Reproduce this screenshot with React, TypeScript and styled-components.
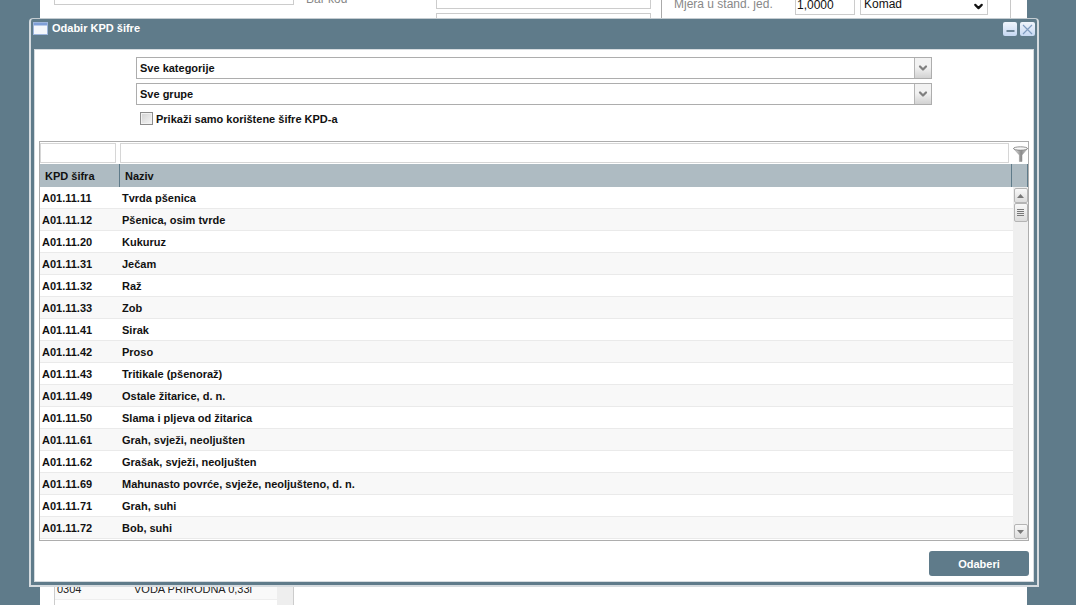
import styled, { createGlobalStyle } from "styled-components";
import { ChevronDown } from "lucide-react";

const rows = [
  ["A01.11.11", "Tvrda pšenica"],
  ["A01.11.12", "Pšenica, osim tvrde"],
  ["A01.11.20", "Kukuruz"],
  ["A01.11.31", "Ječam"],
  ["A01.11.32", "Raž"],
  ["A01.11.33", "Zob"],
  ["A01.11.41", "Sirak"],
  ["A01.11.42", "Proso"],
  ["A01.11.43", "Tritikale (pšenoraž)"],
  ["A01.11.49", "Ostale žitarice, d. n."],
  ["A01.11.50", "Slama i pljeva od žitarica"],
  ["A01.11.61", "Grah, svježi, neoljušten"],
  ["A01.11.62", "Grašak, svježi, neoljušten"],
  ["A01.11.69", "Mahunasto povrće, svježe, neoljušteno, d. n."],
  ["A01.11.71", "Grah, suhi"],
  ["A01.11.72", "Bob, suhi"],
];

const GlobalStyle = createGlobalStyle`
  html, body {
    margin: 0;
    height: 605px;
    overflow: hidden;
    background: #5f7b8a;
    font-family: "Liberation Sans", Arial, sans-serif;
  }
`;

export default function App() {
  return (
    <>
      <GlobalStyle />
      <Page>
        <BackTop>
          <BackInput />
          <BackLabel>Bar kod</BackLabel>
          <BackWideColumn>
            <BackWide />
            <BackWideNext />
          </BackWideColumn>
          <BackDivider />
          <BackUnit>Mjera u stand. jed.</BackUnit>
          <BackNumber>1,0000</BackNumber>
          <BackSelect>
            Komad
            <ChevronDown size={13} strokeWidth={4} color="#111" />
          </BackSelect>
        </BackTop>
        <BackList>
          <BackRows>
            <BackRow>
              <span>0304</span>
              <span>VODA PRIRODNA 0,33l</span>
            </BackRow>
          </BackRows>
          <BackScroll />
        </BackList>
      </Page>
      <Dialog>
        <TitleBar>
          <WindowIcon width="15" height="13" viewBox="0 0 15 13">
            <rect x="0.5" y="0.5" width="14" height="12" fill="#f4f7fc" stroke="#9db5dc" />
            <rect x="1" y="1" width="13" height="2.5" fill="#7f9fd8" />
          </WindowIcon>
          <Title>Odabir KPD šifre</Title>
          <WindowButtons>
            <WindowButton $width={14}>
              <svg width="9" height="9" viewBox="0 0 9 9">
                <rect x="0.5" y="5" width="8" height="2" fill="#6d8597" />
              </svg>
            </WindowButton>
            <WindowButton $width={15}>
              <svg width="11" height="11" viewBox="0 0 11 11">
                <path d="M1 1 L10 10 M10 1 L1 10" stroke="#7f9cc0" strokeWidth="1.2" />
              </svg>
            </WindowButton>
          </WindowButtons>
        </TitleBar>
        <Body>
          <Filters>
            <Combo>
              <ComboText>Sve kategorije</ComboText>
              <ComboArrow>
                <ChevronDown size={12} strokeWidth={4.5} color="#808080" />
              </ComboArrow>
            </Combo>
            <Combo>
              <ComboText>Sve grupe</ComboText>
              <ComboArrow>
                <ChevronDown size={12} strokeWidth={4.5} color="#808080" />
              </ComboArrow>
            </Combo>
            <CheckRow>
              <CheckBox />
              Prikaži samo korištene šifre KPD-a
            </CheckRow>
          </Filters>
          <Grid>
            <FilterRow>
              <FilterCode />
              <FilterName />
              <FilterIcon width="15" height="16" viewBox="0 0 15 16">
                <defs>
                  <linearGradient id="funnel" x1="0" x2="1" y1="0" y2="0">
                    <stop offset="0" stopColor="#f4f4f4" />
                    <stop offset="0.55" stopColor="#8a8a8a" />
                    <stop offset="1" stopColor="#d8d8d8" />
                  </linearGradient>
                </defs>
                <path d="M0.5 2.5 L14.5 2.5 L9 9 L9 15.5 L6.4 15.5 L6.4 9 Z" fill="url(#funnel)" stroke="#888" strokeWidth="0.5" />
                <ellipse cx="7.5" cy="2.5" rx="7" ry="1.7" fill="#f8f8f8" stroke="#6a6a6a" strokeWidth="0.7" />
              </FilterIcon>
            </FilterRow>
            <HeaderRow>
              <CodeHead>KPD šifra</CodeHead>
              <NameHead>Naziv</NameHead>
              <ScrollHead />
            </HeaderRow>
            <GridBody>
              <RowList>
                {rows.map(([code, name], i) => (
                  <Row key={code} $alt={i % 2 === 1}>
                    <CodeCell>{code}</CodeCell>
                    <NameCell>{name}</NameCell>
                  </Row>
                ))}
              </RowList>
              <Scrollbar>
                <ScrollButton>
                  <svg width="7" height="4" viewBox="0 0 7 4">
                    <path d="M3.5 0 L7 4 L0 4 Z" fill="#777" />
                  </svg>
                </ScrollButton>
                <ScrollThumb>
                  <Grip />
                  <Grip />
                  <Grip />
                  <Grip />
                </ScrollThumb>
                <ScrollTrack />
                <ScrollButton>
                  <svg width="7" height="4" viewBox="0 0 7 4">
                    <path d="M0 0 L7 0 L3.5 4 Z" fill="#777" />
                  </svg>
                </ScrollButton>
              </Scrollbar>
            </GridBody>
          </Grid>
          <Footer>
            <PickButton>Odaberi</PickButton>
          </Footer>
        </Body>
      </Dialog>
    </>
  );
}

const Page = styled.div`
  width: 987px;
  height: 605px;
  margin-left: 40px;
  background: #fff;
  display: flex;
  flex-direction: column;
  justify-content: space-between;
  overflow: hidden;
`;

const BackTop = styled.div`
  width: 971px;
  height: 50px;
  box-sizing: border-box;
  border-right: 1px solid #c8c8c8;
  display: flex;
  align-items: flex-start;
  padding-left: 14px;
  font-size: 12px;
  color: #888;
`;

const BackInput = styled.div`
  width: 240px;
  height: 5px;
  box-sizing: border-box;
  border: 1px solid #ccc;
  border-top: 0;
`;

const BackLabel = styled.div`
  margin: -8px 0 0 12px;
  width: 130px;
`;

const BackWideColumn = styled.div`
  width: 215px;
  display: flex;
  flex-direction: column;
  gap: 4px;
`;

const BackWide = styled.div`
  height: 9px;
  box-sizing: border-box;
  border: 1px solid #ccc;
  border-top: 0;
`;

const BackWideNext = styled.div`
  height: 12px;
  box-sizing: border-box;
  border: 1px solid #ccc;
`;

const BackDivider = styled.div`
  width: 1px;
  height: 20px;
  margin-left: 10px;
  background: #aaa;
`;

const BackUnit = styled.div`
  width: 121px;
  margin: -3px 0 0 12px;
`;

const BackNumber = styled.div`
  width: 60px;
  height: 15px;
  box-sizing: border-box;
  border: 1px solid #ccc;
  border-top: 0;
  padding-left: 1px;
  line-height: 11px;
  color: #111;
`;

const BackSelect = styled.div`
  width: 128px;
  height: 15px;
  margin-left: 5px;
  box-sizing: border-box;
  border: 1px solid #ccc;
  border-top: 0;
  padding: 0 2px 0 3px;
  display: flex;
  justify-content: space-between;
  align-items: flex-start;
  line-height: 9px;
  color: #111;
`;

const BackList = styled.div`
  width: 240px;
  margin-left: 14px;
  height: 24px;
  box-sizing: border-box;
  border-left: 1px solid #ccc;
  border-right: 1px solid #ccc;
  display: flex;
`;

const BackRows = styled.div`
  flex: 1;
  min-width: 0;
`;

const BackScroll = styled.div`
  width: 16px;
  background: #eee;
`;

const BackRow = styled.div`
  height: 16px;
  padding: 2px 0 0 2px;
  background: #f9f9f9;
  border-bottom: 1px solid #eee;
  display: grid;
  grid-template-columns: 77px 1fr;
  font-size: 11px;
  color: #222;
  white-space: nowrap;
  overflow: hidden;
`;

const Dialog = styled.div`
  position: absolute;
  left: 29px;
  top: 18px;
  width: 1010px;
  height: 569px;
  box-sizing: border-box;
  background: #5f7b8a;
  border: 2px solid #d5dbdf;
  border-top: 1px solid #c4ccd1;
  border-radius: 4px 4px 0 0;
  padding: 0 3px 3px;
  display: flex;
  flex-direction: column;
`;

const TitleBar = styled.div`
  height: 30px;
  flex: none;
  display: flex;
  align-items: flex-start;
  padding-top: 3px;
  box-sizing: border-box;
`;

const WindowIcon = styled.svg`
  margin-left: -1px;
  flex: none;
`;

const Title = styled.div`
  margin-left: 4px;
  font-size: 11px;
  font-weight: bold;
  color: #fff;
  flex: 1;
`;

const WindowButtons = styled.div`
  display: flex;
  gap: 3px;
  margin-right: -1px;
`;

const WindowButton = styled.div<{ $width: number }>`
  width: ${(p) => p.$width}px;
  height: 14px;
  border-radius: 2px;
  background: linear-gradient(#f0f5fc, #c6d8f2);
  display: flex;
  align-items: center;
  justify-content: center;
`;

const Body = styled.div`
  flex: 1;
  background: #fff;
  border: 1px solid #d5dbdf;
  display: flex;
  flex-direction: column;
  padding: 7px 4px 5px 4px;
  min-height: 0;
`;

const Filters = styled.div`
  margin-left: 97px;
  width: 796px;
  display: flex;
  flex-direction: column;
  gap: 4px;
`;

const Combo = styled.div`
  height: 22px;
  box-sizing: border-box;
  border: 1px solid #adadad;
  display: flex;
`;

const ComboText = styled.div`
  flex: 1;
  font-size: 11px;
  font-weight: bold;
  line-height: 20px;
  padding-left: 3px;
  color: #111;
`;

const ComboArrow = styled.div`
  width: 16px;
  border-left: 1px solid #b5b5b5;
  background: linear-gradient(#f2f2f2 45%, #d2d2d2);
  display: flex;
  align-items: center;
  justify-content: center;
`;

const CheckRow = styled.label`
  display: flex;
  align-items: center;
  gap: 3px;
  margin: 3px 0 0 4px;
  height: 13px;
  font-size: 11px;
  font-weight: bold;
  color: #111;
`;

const CheckBox = styled.span`
  width: 13px;
  height: 13px;
  box-sizing: border-box;
  border: 1px solid #8d8d8d;
  background: linear-gradient(135deg, #d2d2d2, #f6f6f6);
  box-shadow: inset 0 0 0 1px #f2f2f2;
`;

const Grid = styled.div`
  margin-top: 16px;
  height: 400px;
  flex: none;
  box-sizing: border-box;
  border: 1px solid #adadad;
  display: flex;
  flex-direction: column;
`;

const FilterRow = styled.div`
  height: 22px;
  flex: none;
  display: flex;
  padding: 1px 0 0 0;
  gap: 4px;
  box-sizing: border-box;
`;

const FilterCode = styled.div`
  width: 76px;
  height: 20px;
  box-sizing: border-box;
  border: 1px solid #d6d6d6;
`;

const FilterName = styled.div`
  flex: 1;
  height: 20px;
  box-sizing: border-box;
  border: 1px solid #d6d6d6;
`;

const FilterIcon = styled.svg`
  margin: 3px 0 0 0;
  flex: none;
`;

const HeaderRow = styled.div`
  height: 23px;
  flex: none;
  background: #aebbc2;
  display: flex;
  font-size: 11px;
  font-weight: bold;
  line-height: 24px;
  color: #111;
`;

const CodeHead = styled.div`
  width: 80px;
  padding-left: 5px;
  box-sizing: border-box;
  border-right: 1px solid #5f7b8a;
`;

const NameHead = styled.div`
  flex: 1;
  padding-left: 5px;
  border-right: 1px solid #5f7b8a;
`;

const ScrollHead = styled.div`
  width: 15px;
  border-right: 1px solid #5f7b8a;
`;

const GridBody = styled.div`
  flex: 1;
  display: flex;
  min-height: 0;
  overflow: hidden;
`;

const RowList = styled.div`
  flex: 1;
  min-width: 0;
`;

const Row = styled.div<{ $alt: boolean }>`
  height: 22px;
  box-sizing: border-box;
  display: flex;
  align-items: center;
  background: ${(p) => (p.$alt ? "#f8f8f8" : "#fff")};
  border-bottom: 1px solid #eaeaea;
  font-size: 11px;
  font-weight: bold;
  color: #111;
`;

const CodeCell = styled.div`
  width: 80px;
  padding-left: 2px;
  box-sizing: border-box;
`;

const NameCell = styled.div`
  flex: 1;
  padding-left: 2px;
`;

const Scrollbar = styled.div`
  width: 15px;
  flex: none;
  background: #efefef;
  display: flex;
  flex-direction: column;
  align-items: center;
  padding: 1px 0;
`;

const ScrollButton = styled.div`
  width: 14px;
  height: 15px;
  box-sizing: border-box;
  border: 1px solid #b4b4b4;
  border-radius: 2px;
  background: linear-gradient(#f8f8f8, #dcdcdc);
  display: flex;
  align-items: center;
  justify-content: center;
  flex: none;
`;

const ScrollThumb = styled.div`
  width: 14px;
  height: 19px;
  box-sizing: border-box;
  border: 1px solid #b4b4b4;
  border-radius: 2px;
  background: linear-gradient(#f8f8f8, #dcdcdc);
  display: flex;
  flex-direction: column;
  align-items: center;
  justify-content: center;
  gap: 1px;
  flex: none;
`;

const Grip = styled.div`
  width: 7px;
  height: 1px;
  background: #777;
`;

const ScrollTrack = styled.div`
  flex: 1;
`;

const Footer = styled.div`
  flex: 1;
  display: flex;
  justify-content: flex-end;
  align-items: flex-end;
`;

const PickButton = styled.button`
  width: 100px;
  height: 25px;
  border: 0;
  border-radius: 3px;
  background: #5f7b8a;
  color: #fff;
  font-family: "Liberation Sans", Arial, sans-serif;
  font-size: 11px;
  font-weight: bold;
`;
